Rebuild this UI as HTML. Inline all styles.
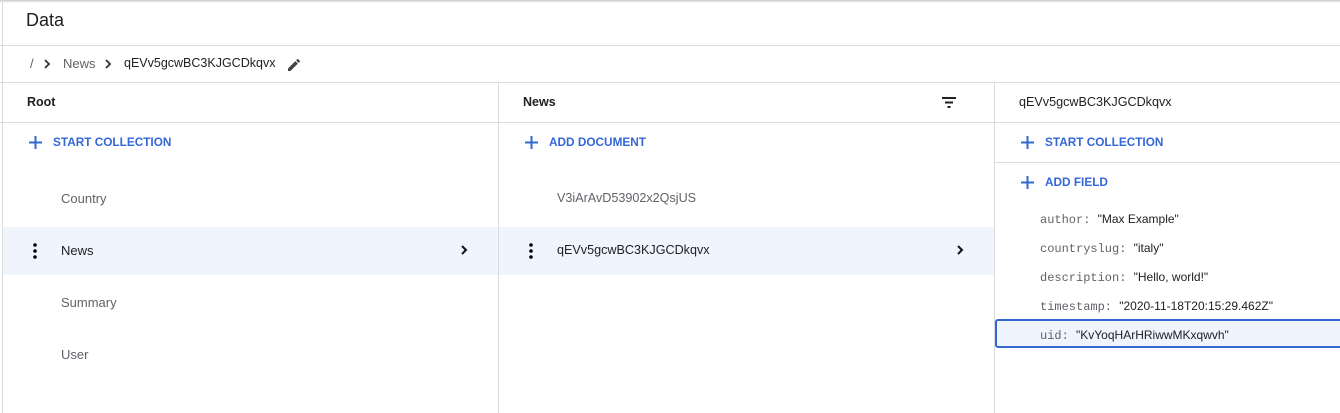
<!DOCTYPE html>
<html><head><style>
*{margin:0;padding:0;box-sizing:border-box}
body{width:1340px;height:413px;background:#fff;font-family:"Liberation Sans",sans-serif;position:relative;overflow:hidden;color:#202124}
.a{position:absolute}
.t{position:absolute;white-space:nowrap}
.hl{position:absolute;height:1px;background:#dadce0}
.vl{position:absolute;width:1px;background:#dadce0}
.blue{color:#3367d6;font-weight:bold;font-size:11.8px;letter-spacing:0}
.g{color:#5f6368;font-size:13px}
.k{font-family:"Liberation Mono",monospace;font-size:12px;color:#5f6368}
.v{font-size:12px;color:#202124}
</style></head><body>
<div class="a" style="left:0;top:0;width:1340px;height:3px;background:linear-gradient(#c8c8c8,#fff)"></div>
<div class="t" style="left:26px;top:10px;font-size:18px">Data</div>
<div class="hl" style="left:0;top:45px;width:1340px"></div>
<div class="vl" style="left:2px;top:0;height:413px"></div>
<div class="t g" style="left:30px;top:56px">/</div>
<svg class="a" style="left:41px;top:58px" width="12" height="12" viewBox="0 0 12 12"><path d="M4 2l4 4-4 4" stroke="#333" stroke-width="1.8" fill="none"/></svg>
<div class="t g" style="left:63px;top:56px">News</div>
<svg class="a" style="left:102px;top:58px" width="12" height="12" viewBox="0 0 12 12"><path d="M4 2l4 4-4 4" stroke="#333" stroke-width="1.8" fill="none"/></svg>
<div class="t" style="left:124px;top:56px;font-size:12.5px">qEVv5gcwBC3KJGCDkqvx</div>
<svg class="a" style="left:286px;top:57px" width="16" height="16" viewBox="0 0 24 24"><path d="M3 17.25V21h3.75L17.81 9.94l-3.75-3.75L3 17.25zM20.71 7.04a1 1 0 000-1.41l-2.34-2.34a1 1 0 00-1.41 0l-1.83 1.83 3.75 3.75 1.83-1.83z" fill="#444"/></svg>
<div class="hl" style="left:0;top:82px;width:1340px"></div>
<div class="hl" style="left:0;top:122px;width:1340px"></div>
<div class="hl" style="left:995px;top:162px;width:345px"></div>
<div class="vl" style="left:498px;top:82px;height:331px"></div>
<div class="vl" style="left:994px;top:82px;height:331px"></div>
<!-- col1 -->
<div class="t" style="left:27px;top:95px;font-size:12.5px;font-weight:bold">Root</div>
<svg class="a" style="left:29px;top:136px" width="13" height="13"><path d="M6.5 0v13M0 6.5h13" stroke="#3367d6" stroke-width="2"/></svg>
<div class="t blue" style="left:53px;top:135px">START COLLECTION</div>
<div class="t g" style="left:61px;top:191px">Country</div>
<div class="a" style="left:3px;top:227px;width:495px;height:48px;background:#eff4fd"></div>
<svg class="a" style="left:33px;top:243px" width="4" height="16"><circle cx="2" cy="2" r="1.8"/><circle cx="2" cy="8" r="1.8"/><circle cx="2" cy="14" r="1.8"/></svg>
<div class="t" style="left:61px;top:243px;font-size:13px">News</div>
<svg class="a" style="left:458px;top:244px" width="12" height="12" viewBox="0 0 12 12"><path d="M4 2l4 4-4 4" stroke="#111" stroke-width="2" fill="none"/></svg>
<div class="t g" style="left:61px;top:295px">Summary</div>
<div class="t g" style="left:61px;top:347px">User</div>
<!-- col2 -->
<div class="t" style="left:523px;top:95px;font-size:12.5px;font-weight:bold">News</div>
<svg class="a" style="left:942px;top:97px" width="14" height="11"><path d="M0 1h14M3 5.5h8M5.5 10h3" stroke="#222" stroke-width="2"/></svg>
<svg class="a" style="left:525px;top:136px" width="13" height="13"><path d="M6.5 0v13M0 6.5h13" stroke="#3367d6" stroke-width="2"/></svg>
<div class="t blue" style="left:549px;top:135px">ADD DOCUMENT</div>
<div class="t g" style="left:557px;top:191px;font-size:12.6px">V3iArAvD53902x2QsjUS</div>
<div class="a" style="left:499px;top:227px;width:495px;height:48px;background:#eff4fd"></div>
<svg class="a" style="left:529px;top:243px" width="4" height="16"><circle cx="2" cy="2" r="1.8"/><circle cx="2" cy="8" r="1.8"/><circle cx="2" cy="14" r="1.8"/></svg>
<div class="t" style="left:557px;top:243px;font-size:12.6px">qEVv5gcwBC3KJGCDkqvx</div>
<svg class="a" style="left:954px;top:244px" width="12" height="12" viewBox="0 0 12 12"><path d="M4 2l4 4-4 4" stroke="#111" stroke-width="2" fill="none"/></svg>
<!-- col3 -->
<div class="t" style="left:1019px;top:95px;font-size:12.6px">qEVv5gcwBC3KJGCDkqvx</div>
<svg class="a" style="left:1021px;top:136px" width="13" height="13"><path d="M6.5 0v13M0 6.5h13" stroke="#3367d6" stroke-width="2"/></svg>
<div class="t blue" style="left:1045px;top:135px">START COLLECTION</div>
<svg class="a" style="left:1021px;top:176px" width="13" height="13"><path d="M6.5 0v13M0 6.5h13" stroke="#3367d6" stroke-width="2"/></svg>
<div class="t blue" style="left:1045px;top:175px">ADD FIELD</div>
<div class="t" style="left:1040px;top:210px"><span class="k">author: </span><span class="v">"Max Example"</span></div>
<div class="t" style="left:1040px;top:239px"><span class="k">countryslug: </span><span class="v">"italy"</span></div>
<div class="t" style="left:1040px;top:268px"><span class="k">description: </span><span class="v">"Hello, world!"</span></div>
<div class="t" style="left:1040px;top:297px"><span class="k">timestamp: </span><span class="v">"2020-11-18T20:15:29.462Z"</span></div>
<div class="a" style="left:995px;top:319px;width:350px;height:29px;background:#eff4fd;border:2px solid #3367d6;border-radius:3px"></div>
<div class="t" style="left:1040px;top:326px"><span class="k">uid: </span><span class="v">"KvYoqHArHRiwwMKxqwvh"</span></div>
</body></html>
